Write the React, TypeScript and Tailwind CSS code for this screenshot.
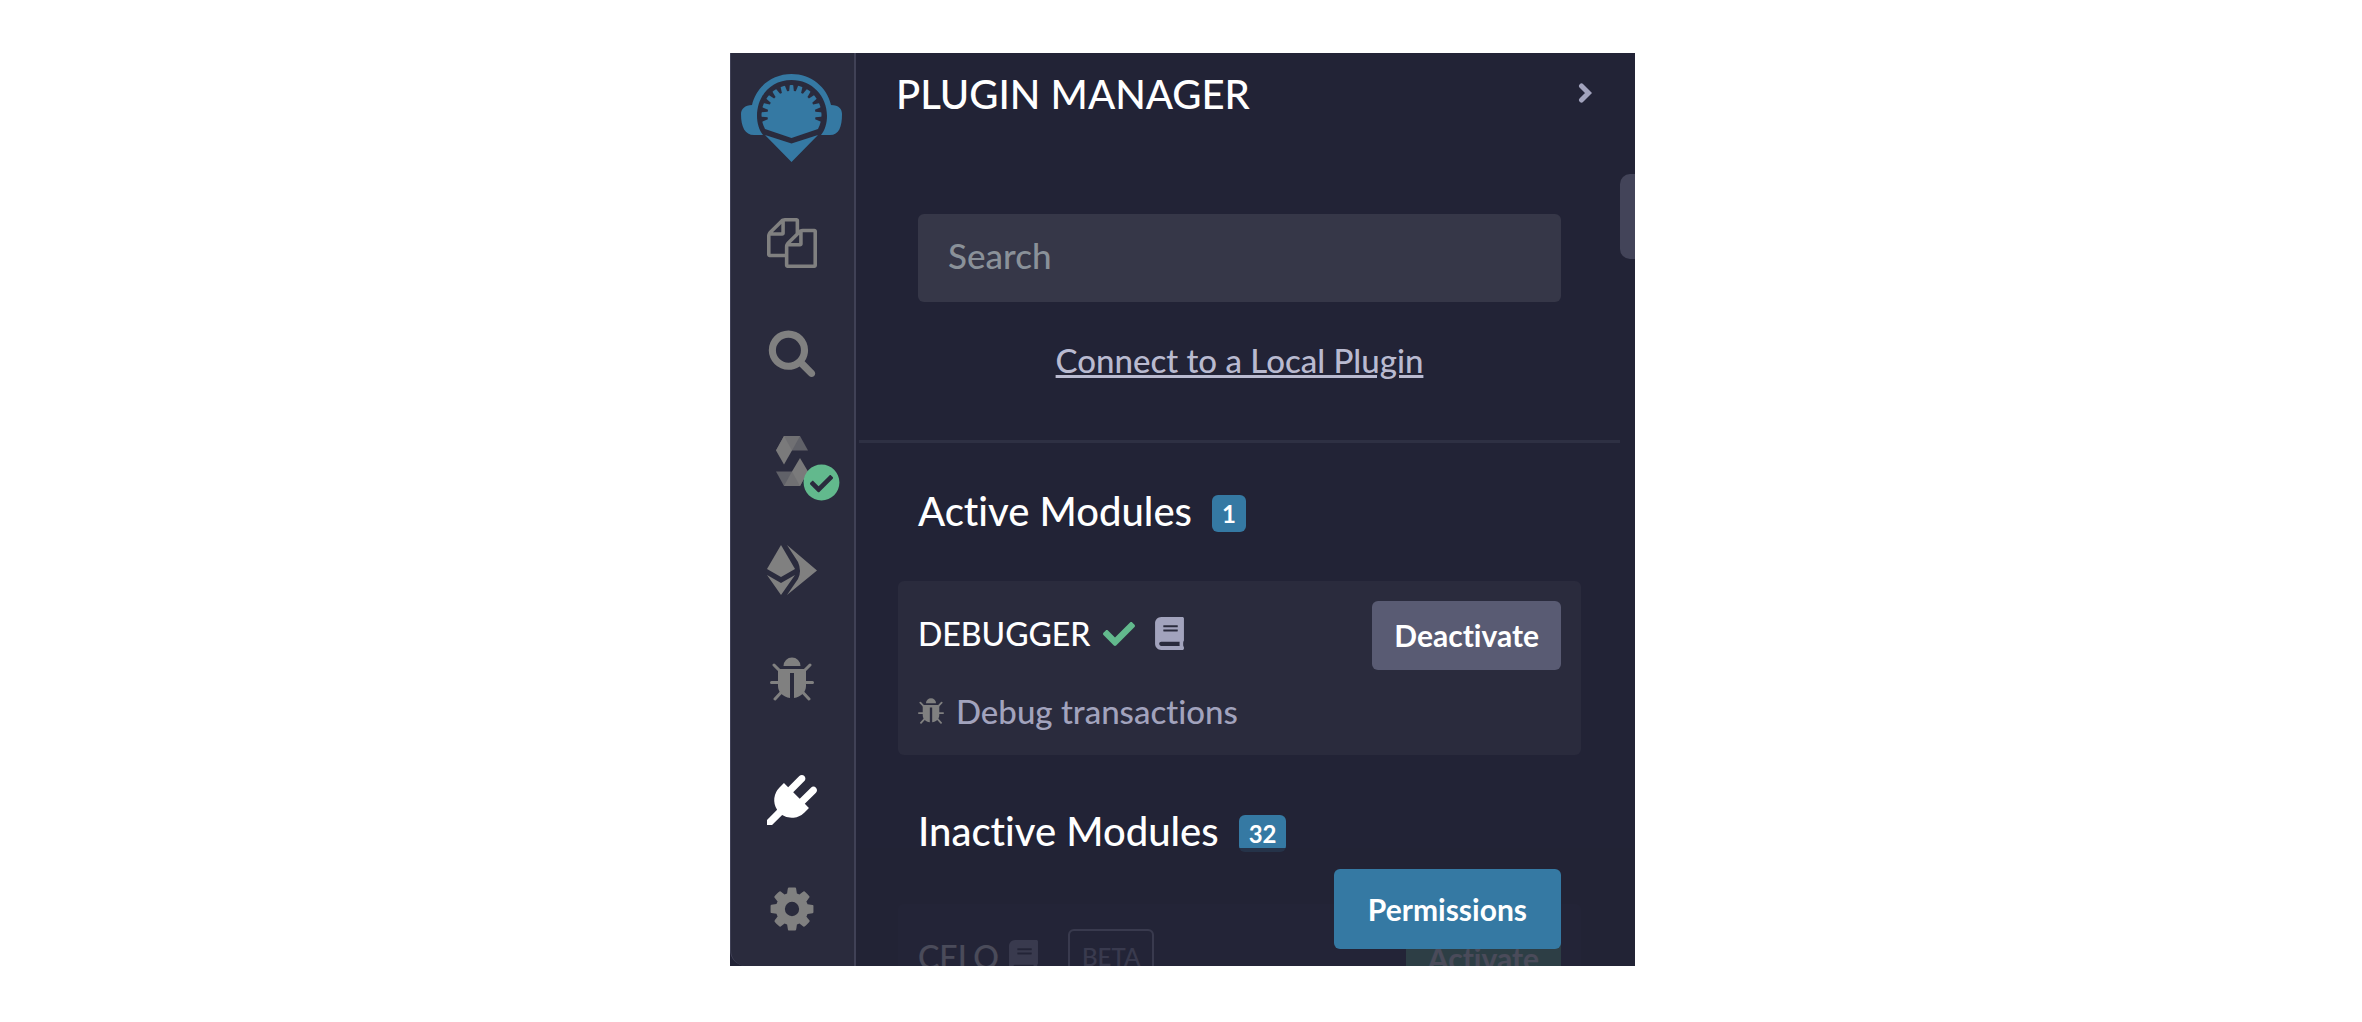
import type { ReactNode } from "react";
import { FaBook, FaCheck, FaCheckCircle } from "react-icons/fa";

const BugIcon = ({ className }: { className?: string }) => (
  <svg viewBox="0 0 44 44" className={className} fill="currentColor" aria-hidden="true">
    <path d="M13.500 9a8.500 8.500 0 0 1 17 0z" />
    <path d="M8 12h28v17c0 6-5 11-12 12V16h-4v25C13 40 8 35 8 29z" />
    <path
      d="M4 8l6 6M40 8l-6 6M1.500 25.500H9M42.500 25.500H35M5 42l6.500-7M39 42l-6.500-7"
      fill="none"
      stroke="currentColor"
      strokeWidth="3"
      strokeLinecap="round"
    />
  </svg>
);

const Logo = () => {
  const notches = [-98, -80, -62, -44, -26, -8, 8, 26, 44, 62, 80, 98];
  return (
    <svg viewBox="0 0 101 88" className="h-[88px] w-[101px]" aria-hidden="true">
      <path
        fill="#3579a3"
        d="M11 31C15 13 31 0 50.500 0S86 13 90 31c8 0 11 4 11 9 0 13-3 21-12 21h-9c4-5 6-12 6-19C86 22 71 6 50.500 6S16 22 16 42c0 7 2 14 6 19h-9C4 61 0 53 0 40c0-5 4-9 11-9z"
      />
      <path fill="#3579a3" d="M24 55a30 30 0 1 1 53 0L50.500 64z" />
      {notches.map((deg) => (
        <path
          key={deg}
          d="M47.500 9h6L51.500 17h-2z"
          fill="#2a2b3d"
          transform={`rotate(${deg} 50.5 41)`}
        />
      ))}
      <path fill="#3579a3" d="M24 61l26.500 8.500L77 61 50.500 88z" />
    </svg>
  );
};

const SIDE_ICONS: { label: string; icon: ReactNode; className?: string }[] = [
  {
    label: "File explorer",
    icon: (
      <svg viewBox="0 0 1792 1792" className="size-[50px]" fill="currentColor" aria-hidden="true">
        <path d="M1696 384q40 0 68 28t28 68v1216q0 40-28 68t-68 28h-960q-40 0-68-28t-28-68v-288h-544q-40 0-68-28t-28-68v-672q0-40 20-88t48-76l408-408q28-28 76-48t88-20h416q40 0 68 28t28 68v328q68-40 128-40h416zm-544 213l-299 299h299v-299zm-640-384l-299 299h299v-299zm196 647l316-316v-416h-384v416q0 40-28 68t-68 28h-416v640h512v-256q0-40 20-88t48-76zm956 804v-1152h-384v416q0 40-28 68t-68 28h-416v640h896z" />
      </svg>
    ),
  },
  {
    label: "Search in files",
    icon: (
      <svg viewBox="0 0 1792 1792" className="size-[50px]" fill="currentColor" aria-hidden="true">
        <path d="M1216 832q0-185-131.5-316.5t-316.5-131.5-316.5 131.5-131.5 316.5 131.5 316.5 316.5 131.5 316.5-131.5 131.5-316.5zm512 832q0 52-38 90t-90 38q-54 0-90-38l-343-342q-179 124-399 124-143 0-273.5-55.5t-225-150-150-225-55.5-273.5 55.5-273.5 150-225 225-150 273.5-55.5 273.5 55.5 225 150 150 225 55.5 273.5q0 220-124 399l343 343q37 37 37 90z" />
      </svg>
    ),
  },
  {
    label: "Solidity compiler",
    icon: (
      <>
        <svg viewBox="0 0 32 50" className="h-[50px] w-8" aria-hidden="true">
          <path fill="#606168" d="M8 0h16l8 14.500H16z" />
          <path fill="#707073" d="M8 0h16l-8 14.500H0z" />
          <path fill="#7a7a7b" d="M0 14.500L8 0l8 14.500L8 28.500z" />
          <path fill="#606168" d="M0 35.500h16L24 50H8z" />
          <path fill="#707073" d="M32 35.500L24 50H8l8-14.500z" />
          <path fill="#7a7a7b" d="M24 22l8 13.500L24 50l-8-14.500z" />
        </svg>
        <FaCheckCircle className="absolute right-[-16px] bottom-[-8px] size-[37px] text-[#62b98d]" />
      </>
    ),
  },
  {
    label: "Deploy and run transactions",
    icon: (
      <svg viewBox="0 0 50 50" className="size-[50px]" fill="currentColor" aria-hidden="true">
        <path d="M14 0l14 24-14 8L0 24z" />
        <path d="M0 30l14 8 14-8-14 20z" />
        <path d="M20 0l30 25.500L20 50l11-16q4-8 0-17z" />
      </svg>
    ),
  },
  { label: "Debugger", icon: <BugIcon className="size-11" /> },
  {
    label: "Plugin manager",
    className: "mt-3 text-white",
    icon: (
      <svg viewBox="0 0 1792 1792" className="size-[50px]" fill="currentColor" aria-hidden="true">
        <path d="M1755 453q37 38 37 90.500t-37 90.500l-401 400 150 150-160 160q-163 163-389.500 186.500t-411.500-100.500l-362 362h-181v-181l362-362q-124-185-100.500-411.500t186.500-389.500l160-160 150 150 400-401q38-37 91-37t90 37 37 90.500-37 90.500l-400 401 234 234 401-400q38-37 91-37t90 37z" />
      </svg>
    ),
  },
  {
    label: "Settings",
    icon: (
      <svg viewBox="0 0 1792 1792" className="size-[50px]" fill="currentColor" aria-hidden="true">
        <path d="M1152 896q0-106-75-181t-181-75-181 75-75 181 75 181 181 75 181-75 75-181zm512-109v222q0 12-8 23t-20 13l-185 28q-19 54-39 91 35 50 107 138 10 12 10 25t-9 23q-27 37-99 108t-94 71q-12 0-26-9l-138-108q-44 23-91 38-16 136-29 186-7 28-36 28h-222q-14 0-24.5-8.5t-11.5-21.5l-28-184q-49-16-90-37l-141 107q-10 9-25 9-14 0-25-11-126-114-165-168-7-10-7-23 0-12 8-23 15-21 51-66.500t54-70.500q-27-50-41-99l-183-27q-13-2-21-12.5t-8-23.5v-222q0-12 8-23t19-13l186-28q14-46 39-92-40-57-107-138-10-12-10-24 0-10 9-23 26-36 98.500-107.500t94.500-71.500q13 0 26 10l138 107q44-23 91-38 16-136 29-186 7-28 36-28h222q14 0 24.500 8.500t11.500 21.500l28 184q49 16 90 37l142-107q9-9 24-9 13 0 25 10 129 119 165 170 7 8 7 22 0 12-8 23-15 21-51 66.500t-54 70.500q26 50 41 98l183 28q13 2 21 12.500t8 23.500z" />
      </svg>
    ),
  },
];

const SectionTitle = ({ title, count }: { title: string; count: number }) => (
  <h2 className="flex items-center gap-5 px-5 text-[40px] leading-12 text-white">
    {title}
    <span className="mt-1 rounded-md bg-[#3579a3] px-2.5 text-2xl leading-[37px] font-bold">{count}</span>
  </h2>
);

export default function App() {
  return (
    <main className="flex justify-center bg-white pt-[53px] pr-4 pb-14 pl-[19px] font-['Lato','Noto_Sans',sans-serif] font-medium [font-variant-ligatures:none]">
      <div className="flex h-[913px] w-full max-w-[905px] overflow-hidden bg-[#222336]">
        <nav className="flex w-[126px] shrink-0 flex-col items-center rounded-bl-2xl border-r-2 border-l border-[#404156] bg-[#2a2b3d] pt-[21px] pr-0.5">
          <a href="#home" aria-label="Home">
            <Logo />
          </a>
          <div className="mt-[49px] flex flex-col gap-[45px]">
            {SIDE_ICONS.map(({ label, icon, className = "text-[#808080]" }) => (
              <button
                key={label}
                type="button"
                aria-label={label}
                className={`relative flex size-16 items-center justify-center ${className}`}
              >
                {icon}
              </button>
            ))}
          </div>
        </nav>

        <section className="relative flex min-w-0 flex-1 flex-col">
          <header className="flex items-center justify-between pt-4 pr-[43px] pl-10">
            <h1 className="text-[40px] leading-[50px] text-white">PLUGIN MANAGER</h1>
            <button type="button" aria-label="Close panel" className="pb-0.5 text-[#a2a3bd]">
              <svg viewBox="0 0 14 20" className="h-5 w-3.5" aria-hidden="true">
                <path
                  d="M3.500 3l7 7-7 7"
                  fill="none"
                  stroke="currentColor"
                  strokeWidth="5"
                  strokeLinecap="round"
                />
              </svg>
            </button>
          </header>

          <div className="mt-[95px] flex flex-col items-center pr-[74px] pl-[62px]">
            <input
              type="search"
              aria-label="Search"
              placeholder="Search"
              className="h-[88px] w-full rounded-md bg-[#363748] px-[30px] pb-1.5 text-[35px] text-white placeholder:text-[#8a9199]"
            />
            <a href="#local" className="mt-[34px] text-[33px] leading-12 text-[#b9bad0] underline">
              Connect to a Local Plugin
            </a>
          </div>

          <hr className="mt-14 mr-[15px] ml-[3px] border-t-3 border-[#2e3043]" />

          <div className="mr-[54px] ml-[42px] flex flex-col pt-11">
            <SectionTitle title="Active Modules" count={1} />
            <article className="mt-[46px] h-[174px] rounded-md bg-[#2a2b3d] px-5 pt-5">
              <div className="flex items-center justify-between text-white">
                <div className="flex items-center pb-1">
                  <h3 className="text-[32px]">DEBUGGER</h3>
                  <FaCheck className="ml-3 size-8 text-[#62b98d]" />
                  <FaBook className="ml-5 h-[33px] w-[29px] text-[#a2a3bd]" />
                </div>
                <button type="button" className="rounded-md bg-[#595b73] px-[22px] text-[30px] leading-[69px] font-bold">
                  Deactivate
                </button>
              </div>
              <p className="mt-[17px] flex items-center gap-3 text-[33px] leading-12 text-[#a2a3bd]">
                <BugIcon className="size-[26px] text-[#808080]" />
                Debug transactions
              </p>
            </article>

            <div className="mt-[52px]">
              <SectionTitle title="Inactive Modules" count={32} />
            </div>
            <article className="mt-[49px] h-[174px] rounded-md bg-[#2a2b3d] px-5 pt-5">
              <div className="flex items-center justify-between text-white">
                <div className="flex items-center pb-1">
                  <h3 className="text-[32px]">CELO</h3>
                  <FaBook className="ml-2.5 h-[33px] w-[29px] text-[#a2a3bd]" />
                  <span className="ml-[30px] rounded-md border-2 border-[#a2a3bd] px-3 text-2xl leading-[52px] text-[#a2a3bd]">
                    BETA
                  </span>
                </div>
                <button type="button" className="rounded-md bg-[#62b98d] px-[22px] text-[30px] leading-[69px] font-bold">
                  Activate
                </button>
              </div>
            </article>
          </div>

          <div className="absolute inset-x-0 bottom-0 flex h-[118px] items-start justify-end bg-[#222336]/82 pt-[21px] pr-[74px]">
            <button type="button" className="rounded-md bg-[#3579a3] px-[34px] text-[30px] leading-[80px] font-bold text-white">
              Permissions
            </button>
          </div>
          <div className="absolute top-[121px] right-0 h-[85px] w-[15px] rounded-l-[10px] bg-[#434459]" />
        </section>
      </div>
    </main>
  );
}
